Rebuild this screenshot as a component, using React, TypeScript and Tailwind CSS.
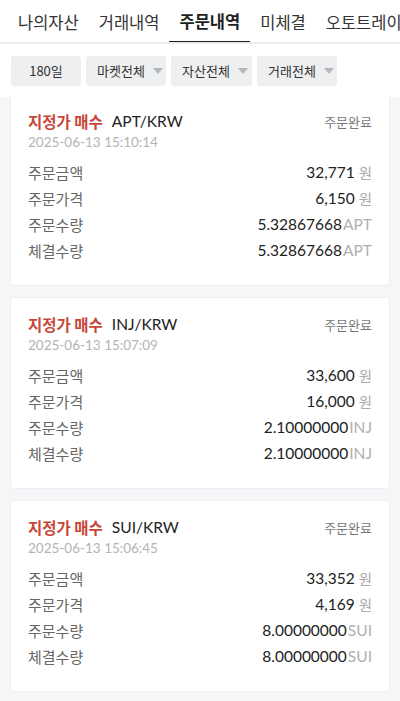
const tabs = ["나의자산", "거래내역", "주문내역", "미체결", "오토트레이딩"]

const filters = [
  { label: "180일", caret: false, w: "w-[70px]" },
  { label: "마켓전체", caret: true, w: "w-[80px]" },
  { label: "자산전체", caret: true, w: "w-[81px]" },
  { label: "거래전체", caret: true, w: "w-[80px]" },
]

const orders = [
  {
    pair: "APT/KRW",
    date: "2025-06-13 15:10:14",
    amount: "32,771",
    price: "6,150",
    qty: "5.32867668",
    filled: "5.32867668",
    coin: "APT",
  },
  {
    pair: "INJ/KRW",
    date: "2025-06-13 15:07:09",
    amount: "33,600",
    price: "16,000",
    qty: "2.10000000",
    filled: "2.10000000",
    coin: "INJ",
  },
  {
    pair: "SUI/KRW",
    date: "2025-06-13 15:06:45",
    amount: "33,352",
    price: "4,169",
    qty: "8.00000000",
    filled: "8.00000000",
    coin: "SUI",
  },
]

const kr = "font-['Noto_Sans_CJK_KR',sans-serif]"
const num = "font-['Lato','Noto_Sans_CJK_KR',sans-serif]"

function Row({ label, value, unit, won }: { label: string; value: string; unit: string; won?: boolean }) {
  return (
    <div className="flex items-center justify-between h-[26px]">
      <span className={`${kr} text-[15px] text-[#666]`}>{label}</span>
      <span className="flex items-center">
        <span className={`${num} text-[15.5px] text-[#222]`}>{value}</span>
        {won ? (
          <span className={`${kr} text-[14.5px] text-[#aaa] ml-[4px]`}>{unit}</span>
        ) : (
          <span className={`${num} text-[15.5px] text-[#b0b0b0] ml-[1px]`}>{unit}</span>
        )}
      </span>
    </div>
  )
}

function OrderCard({ order }: any) {
  return (
    <div className="h-[192px] bg-white rounded-[4px] border border-[#eceef1] px-[17px] pt-[17px]">
      <div className="flex items-center justify-between h-[20px]">
        <div className="flex items-center">
          <span className={`${kr} text-[15.5px] font-bold text-[#c8473a]`}>지정가 매수</span>
          <span className={`${num} text-[15.5px] text-[#222] ml-[9px]`}>{order.pair}</span>
        </div>
        <span className={`${kr} text-[13px] text-[#777]`}>주문완료</span>
      </div>
      <div className={`${num} text-[13.5px] text-[#b4b4b4] h-[20px] leading-[20px]`}>{order.date}</div>
      <div className="mt-[8px]">
        <Row label="주문금액" value={order.amount} unit="원" won />
        <Row label="주문가격" value={order.price} unit="원" won />
        <Row label="주문수량" value={order.qty} unit={order.coin} />
        <Row label="체결수량" value={order.filled} unit={order.coin} />
      </div>
    </div>
  )
}

export default function App() {
  return (
    <div className="w-[400px] h-[701px] overflow-hidden bg-[#f5f6f8]">
      {/* tabs */}
      <div className="bg-white h-[44px] border-b-2 border-[#ebecee] flex pl-[8px] overflow-hidden whitespace-nowrap">
        {tabs.map((t) => (
          <div
            key={t}
            className={`${kr} shrink-0 px-[10px] h-[44px] flex items-center text-[16.5px] ${
              t === "주문내역"
                ? "font-bold text-[#1d1f23] border-b-[3px] border-[#1d1f23] pt-[1px]"
                : "text-[#333]"
            }`}
          >
            {t}
          </div>
        ))}
      </div>

      {/* filters */}
      <div className="bg-white pt-[12px] pb-[11px] pl-[11px] flex gap-[5px]">
        {filters.map((f) => (
          <div
            key={f.label}
            className={`${f.w} h-[30px] rounded-[3px] bg-[#eeeff1] flex items-center ${
              f.caret ? "pl-[11px]" : "justify-center"
            }`}
          >
            <span className={`${kr} text-[13px] text-[#333]`}>{f.label}</span>
            {f.caret && (
              <span className="ml-[8px] w-0 h-0 border-l-[5px] border-r-[5px] border-t-[6px] border-l-transparent border-r-transparent border-t-[#b5b7ba]" />
            )}
          </div>
        ))}
      </div>

      {/* list */}
      <div className="overflow-hidden px-[10px]">
        <div className="-mt-[3px] flex flex-col gap-[11px]">
          {orders.map((o) => (
            <OrderCard key={o.pair} order={o} />
          ))}
        </div>
      </div>
    </div>
  )
}
